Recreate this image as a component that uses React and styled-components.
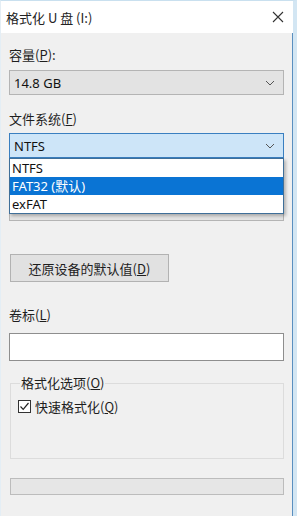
import React from "react";
import styled, { createGlobalStyle } from "styled-components";

const Global = createGlobalStyle`
  html, body { margin: 0; padding: 0; background: #f0f0f0; }
  body { font-family: "Noto Sans", "Noto Sans CJK SC", sans-serif; font-size: 13px; color: #1a1a1a; }
  * { box-sizing: border-box; }
`;

const Window = styled.div`
  width: 297px;
  height: 516px;
  background: #f0f0f0;
  border-top: 1px solid #c9e0ef;
  border-left: 1px solid #e4eef5;
  border-right: 4px solid #d3e6f3;
  box-shadow: inset -1px 0 0 #5a8fc0;
  position: relative;
  overflow: hidden;
`;

const TitleBar = styled.div`
  height: 32px;
  background: #ffffff;
  display: flex;
  align-items: center;
  justify-content: space-between;
  padding: 0 9px 0 5px;
`;

const Title = styled.span`
  font-size: 13px;
  color: #222;
  font-family: "Noto Sans CJK SC", sans-serif;
`;

const Body = styled.div`
  display: flex;
  flex-direction: column;
  padding: 0 10px 0 8px;
`;

const Label = styled.div`
  height: 16px;
  line-height: 16px;
  margin-top: ${(p) => p.$mt}px;
  font-family: "Noto Sans CJK SC", sans-serif;
  font-size: 13px;
  color: #1e1e1e;
  u { text-decoration: underline; text-underline-offset: 1px; }
`;

const Combo = styled.div`
  position: relative;
  margin-top: ${(p) => p.$mt}px;
  height: 25px;
  width: 275px;
  display: flex;
  align-items: center;
  justify-content: space-between;
  padding: 0 8px 0 4px;
  background: ${(p) => (p.$focus ? "#cde5f8" : "#e3e3e3")};
  border: 1px solid ${(p) => (p.$focus ? "#3a7fc0" : "#b4b4b4")};
  font-size: 13px;
  color: #111;
`;

const ComboText = styled.span`
  font-family: "Noto Sans", "Noto Sans CJK SC", sans-serif;
`;

const List = styled.div`
  position: absolute;
  top: 24px;
  left: -1px;
  width: 275px;
  background: #ffffff;
  border: 1px solid #3f6f99;
  box-shadow: 2px 2px 3px rgba(0, 0, 0, 0.25);
  z-index: 2;
  display: flex;
  flex-direction: column;
`;

const Item = styled.div`
  height: 18px;
  line-height: 18px;
  padding-left: 2px;
  font-family: "Noto Sans", "Noto Sans CJK SC", sans-serif;
  font-size: 13px;
  background: ${(p) => (p.$sel ? "#0a74d4" : "#ffffff")};
  color: ${(p) => (p.$sel ? "#ffffff" : "#111")};
`;

const HiddenSpacer = styled.div`
  height: 16px;
  margin-top: 16px;
`;

const Button = styled.div`
  margin-top: ${(p) => p.$mt}px;
  margin-left: 1px;
  width: 159px;
  height: 28px;
  display: flex;
  align-items: center;
  justify-content: center;
  background: #e1e1e1;
  border: 1px solid #b2b2b2;
  font-family: "Noto Sans CJK SC", sans-serif;
  font-size: 13px;
  color: #1e1e1e;
  u { text-decoration: underline; text-underline-offset: 1px; }
`;

const TextInput = styled.div`
  margin-top: ${(p) => p.$mt}px;
  width: 275px;
  height: 28px;
  background: #ffffff;
  border: 1px solid #8e8e8e;
`;

const Group = styled.fieldset`
  margin: 14px 0 0 1px;
  width: 274px;
  height: 84px;
  border: 1px solid #dcdcdc;
  padding: 6px 7px 0;
  display: flex;
  flex-direction: column;
`;

const Legend = styled.legend`
  padding: 0 1px;
  margin-left: 2px;
  font-family: "Noto Sans CJK SC", sans-serif;
  font-size: 13px;
  line-height: 16px;
  color: #1e1e1e;
  u { text-decoration: underline; text-underline-offset: 1px; }
`;

const CheckRow = styled.div`
  display: flex;
  align-items: center;
  gap: 4px;
  font-family: "Noto Sans CJK SC", sans-serif;
  font-size: 13px;
  color: #1e1e1e;
  u { text-decoration: underline; text-underline-offset: 1px; }
`;

const Box = styled.span`
  width: 13px;
  height: 13px;
  border: 1px solid #333;
  background: #fff;
  display: flex;
  align-items: center;
  justify-content: center;
`;

const Progress = styled.div`
  margin-top: 19px;
  margin-left: 1px;
  width: 274px;
  height: 17px;
  background: #e6e6e6;
  border: 1px solid #bcbcbc;
`;

const Chevron = () => (
  <svg width="10" height="6" viewBox="0 0 10 6">
    <path d="M1 1 L5 5 L9 1" fill="none" stroke="#555" strokeWidth="1" />
  </svg>
);

export default function App() {
  return (
    <>
      <Global />
      <Window>
        <TitleBar>
          <Title>格式化 U 盘 (I:)</Title>
          <svg width="12" height="12" viewBox="0 0 12 12">
            <path d="M1 1 L11 11 M11 1 L1 11" stroke="#333" strokeWidth="1.1" fill="none" />
          </svg>
        </TitleBar>
        <Body>
          <Label $mt={14}>容量(<u>P</u>):</Label>
          <Combo $mt={7}>
            <ComboText>14.8 GB</ComboText>
            <Chevron />
          </Combo>
          <Label $mt={16}>文件系统(<u>F</u>)</Label>
          <Combo $mt={6} $focus>
            <ComboText>NTFS</ComboText>
            <Chevron />
            <List>
              <Item>NTFS</Item>
              <Item $sel>FAT32 (默认)</Item>
              <Item>exFAT</Item>
            </List>
          </Combo>
          <HiddenSpacer />
          <Combo $mt={6}>
            <span />
            <Chevron />
          </Combo>
          <Button $mt={33}>
            <span>还原设备的默认值(<u>D</u>)</span>
          </Button>
          <Label $mt={25}>卷标(<u>L</u>)</Label>
          <TextInput $mt={10} />
          <Group>
            <Legend>格式化选项(<u>O</u>)</Legend>
            <CheckRow>
              <Box>
                <svg width="11" height="11" viewBox="0 0 11 11">
                  <path d="M1.5 5.5 L4.2 8.3 L9.5 2" fill="none" stroke="#222" strokeWidth="1.2" />
                </svg>
              </Box>
              <span>快速格式化(<u>Q</u>)</span>
            </CheckRow>
          </Group>
          <Progress />
        </Body>
      </Window>
    </>
  );
}
